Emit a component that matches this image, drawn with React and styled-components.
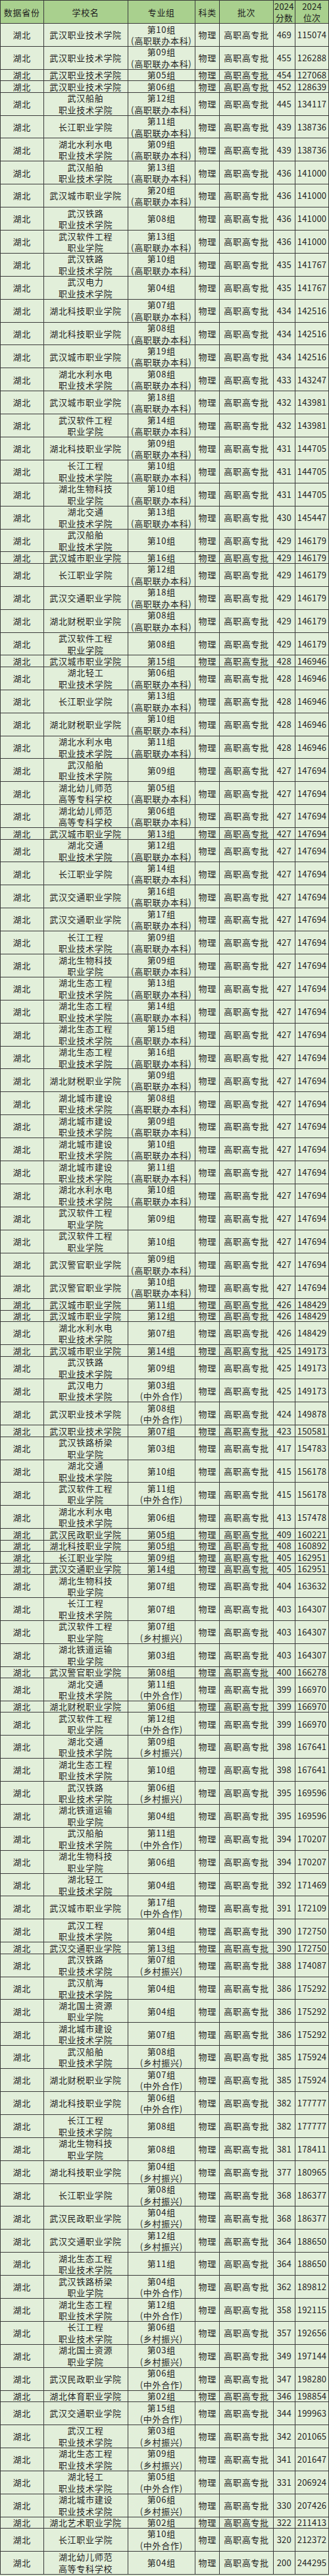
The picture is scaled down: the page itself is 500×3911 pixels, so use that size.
import React from 'react'
import styled, { createGlobalStyle } from 'styled-components'

const GlobalStyle = createGlobalStyle`
  html, body {
    margin: 0;
    padding: 0;
    background: #e2efda;
  }
`

const COLS = '66.5px 128px 102.5px 37.3px 81.4px 33.3px 51px'
const TALL = 34.9
const SHORT = 17.45

const StyledTable = styled.div`
  width: 500px;
  font-family: "Noto Sans CJK SC", "Noto Sans", sans-serif;
  font-size: 13px;
  color: #1f1f1f;
  background: #e2efda;
`

const StyledRow = styled.div`
  display: grid;
  grid-template-columns: ${COLS};
  height: ${props => props.$h}px;
  box-sizing: border-box;
  background: ${props => props.$head ? '#a9d08e' : '#e2efda'};
`

const StyledCell = styled.div`
  display: flex;
  flex-direction: column;
  align-items: center;
  justify-content: center;
  box-sizing: border-box;
  border-right: 1px solid #3b3b3b;
  border-bottom: 1px solid #3b3b3b;
  &:first-child {
    border-left: 1px solid #3b3b3b;
  }
  line-height: 17.45px;
  letter-spacing: ${props => props.$num ? '0.2px' : '0.7px'};
  white-space: nowrap;
  overflow: hidden;
`

const StyledHeadCell = styled(StyledCell)`
  border-top: 1px solid #3b3b3b;
  line-height: 17px;
  color: #222;
`

const StyledLine = styled.span`
  display: block;
`

// school (two lines split by "/"), group, note, score, rank
const data = [
  ['武汉职业技术学院', '第10组', '高职联办本科', 469, 115074],
  ['武汉职业技术学院', '第09组', '高职联办本科', 455, 126288],
  ['武汉职业技术学院', '第05组', '', 454, 127068],
  ['武汉职业技术学院', '第06组', '', 452, 128639],
  ['武汉船舶/职业技术学院', '第12组', '高职联办本科', 445, 134117],
  ['长江职业学院', '第11组', '高职联办本科', 439, 138736],
  ['湖北水利水电/职业技术学院', '第09组', '高职联办本科', 439, 138736],
  ['武汉船舶/职业技术学院', '第13组', '高职联办本科', 436, 141000],
  ['武汉城市职业学院', '第20组', '高职联办本科', 436, 141000],
  ['武汉铁路/职业技术学院', '第08组', '', 436, 141000],
  ['武汉软件工程/职业学院', '第13组', '高职联办本科', 436, 141000],
  ['武汉铁路/职业技术学院', '第10组', '高职联办本科', 435, 141767],
  ['武汉电力/职业技术学院', '第04组', '', 435, 141767],
  ['湖北科技职业学院', '第07组', '高职联办本科', 434, 142516],
  ['湖北科技职业学院', '第08组', '高职联办本科', 434, 142516],
  ['武汉城市职业学院', '第19组', '高职联办本科', 434, 142516],
  ['湖北水利水电/职业技术学院', '第08组', '高职联办本科', 433, 143247],
  ['武汉城市职业学院', '第18组', '高职联办本科', 432, 143981],
  ['武汉软件工程/职业学院', '第14组', '高职联办本科', 432, 143981],
  ['湖北科技职业学院', '第09组', '高职联办本科', 431, 144705],
  ['长江工程/职业技术学院', '第10组', '高职联办本科', 431, 144705],
  ['湖北生物科技/职业学院', '第10组', '高职联办本科', 431, 144705],
  ['湖北交通/职业技术学院', '第13组', '高职联办本科', 430, 145447],
  ['武汉船舶/职业技术学院', '第10组', '', 429, 146179],
  ['武汉城市职业学院', '第16组', '', 429, 146179],
  ['长江职业学院', '第12组', '高职联办本科', 429, 146179],
  ['武汉交通职业学院', '第18组', '高职联办本科', 429, 146179],
  ['湖北财税职业学院', '第08组', '高职联办本科', 429, 146179],
  ['武汉软件工程/职业学院', '第08组', '', 429, 146179],
  ['武汉城市职业学院', '第15组', '', 428, 146946],
  ['湖北轻工/职业技术学院', '第06组', '高职联办本科', 428, 146946],
  ['长江职业学院', '第13组', '高职联办本科', 428, 146946],
  ['湖北财税职业学院', '第10组', '高职联办本科', 428, 146946],
  ['湖北水利水电/职业技术学院', '第11组', '高职联办本科', 428, 146946],
  ['武汉船舶/职业技术学院', '第09组', '', 427, 147694],
  ['湖北幼儿师范/高等专科学校', '第05组', '高职联办本科', 427, 147694],
  ['湖北幼儿师范/高等专科学校', '第06组', '高职联办本科', 427, 147694],
  ['武汉城市职业学院', '第13组', '', 427, 147694],
  ['湖北交通/职业技术学院', '第12组', '高职联办本科', 427, 147694],
  ['长江职业学院', '第14组', '高职联办本科', 427, 147694],
  ['武汉交通职业学院', '第16组', '高职联办本科', 427, 147694],
  ['武汉交通职业学院', '第17组', '高职联办本科', 427, 147694],
  ['长江工程/职业技术学院', '第09组', '高职联办本科', 427, 147694],
  ['湖北生物科技/职业学院', '第09组', '高职联办本科', 427, 147694],
  ['湖北生态工程/职业技术学院', '第13组', '高职联办本科', 427, 147694],
  ['湖北生态工程/职业技术学院', '第14组', '高职联办本科', 427, 147694],
  ['湖北生态工程/职业技术学院', '第15组', '高职联办本科', 427, 147694],
  ['湖北生态工程/职业技术学院', '第16组', '高职联办本科', 427, 147694],
  ['湖北财税职业学院', '第09组', '高职联办本科', 427, 147694],
  ['湖北城市建设/职业技术学院', '第08组', '高职联办本科', 427, 147694],
  ['湖北城市建设/职业技术学院', '第09组', '高职联办本科', 427, 147694],
  ['湖北城市建设/职业技术学院', '第10组', '高职联办本科', 427, 147694],
  ['湖北城市建设/职业技术学院', '第11组', '高职联办本科', 427, 147694],
  ['湖北水利水电/职业技术学院', '第10组', '高职联办本科', 427, 147694],
  ['武汉软件工程/职业学院', '第09组', '', 427, 147694],
  ['武汉软件工程/职业学院', '第10组', '', 427, 147694],
  ['武汉警官职业学院', '第09组', '高职联办本科', 427, 147694],
  ['武汉警官职业学院', '第10组', '高职联办本科', 427, 147694],
  ['武汉城市职业学院', '第11组', '', 426, 148429],
  ['武汉城市职业学院', '第12组', '', 426, 148429],
  ['湖北水利水电/职业技术学院', '第07组', '', 426, 148429],
  ['武汉城市职业学院', '第14组', '', 425, 149173],
  ['武汉铁路/职业技术学院', '第09组', '', 425, 149173],
  ['武汉电力/职业技术学院', '第03组', '中外合作', 425, 149173],
  ['武汉职业技术学院', '第08组', '中外合作', 424, 149878],
  ['武汉职业技术学院', '第07组', '', 423, 150581],
  ['武汉铁路桥梁/职业学院', '第03组', '', 417, 154783],
  ['湖北交通/职业技术学院', '第10组', '', 415, 156178],
  ['武汉软件工程/职业学院', '第11组', '中外合作', 415, 156178],
  ['湖北水利水电/职业技术学院', '第06组', '', 413, 157478],
  ['武汉民政职业学院', '第05组', '', 409, 160221],
  ['湖北科技职业学院', '第05组', '', 408, 160892],
  ['长江职业学院', '第09组', '', 405, 162951],
  ['武汉交通职业学院', '第14组', '', 405, 162951],
  ['湖北生物科技/职业学院', '第07组', '', 404, 163632],
  ['长江工程/职业技术学院', '第07组', '', 403, 164307],
  ['武汉软件工程/职业学院', '第07组', '乡村振兴', 403, 164307],
  ['湖北铁道运输/职业学院', '第03组', '', 403, 164307],
  ['武汉警官职业学院', '第08组', '', 400, 166278],
  ['湖北交通/职业技术学院', '第11组', '中外合作', 399, 166970],
  ['湖北财税职业学院', '第06组', '', 399, 166970],
  ['武汉软件工程/职业学院', '第12组', '中外合作', 399, 166970],
  ['湖北交通/职业技术学院', '第09组', '乡村振兴', 398, 167641],
  ['湖北生态工程/职业技术学院', '第10组', '', 398, 167641],
  ['武汉铁路/职业技术学院', '第06组', '乡村振兴', 395, 169596],
  ['湖北铁道运输/职业学院', '第04组', '', 395, 169596],
  ['武汉船舶/职业技术学院', '第11组', '中外合作', 394, 170207],
  ['湖北生物科技/职业学院', '第06组', '', 394, 170207],
  ['湖北轻工/职业技术学院', '第04组', '', 392, 171469],
  ['武汉城市职业学院', '第17组', '中外合作', 391, 172109],
  ['武汉工程/职业技术学院', '第04组', '', 390, 172750],
  ['武汉交通职业学院', '第13组', '', 390, 172750],
  ['武汉铁路/职业技术学院', '第07组', '乡村振兴', 388, 174087],
  ['武汉航海/职业技术学院', '第04组', '', 386, 175292],
  ['湖北国土资源/职业学院', '第04组', '', 386, 175292],
  ['湖北城市建设/职业技术学院', '第07组', '', 386, 175292],
  ['武汉船舶/职业技术学院', '第08组', '乡村振兴', 385, 175924],
  ['湖北财税职业学院', '第07组', '中外合作', 385, 175924],
  ['湖北科技职业学院', '第06组', '中外合作', 382, 177777],
  ['长江工程/职业技术学院', '第08组', '', 382, 177777],
  ['湖北生物科技/职业学院', '第08组', '', 381, 178411],
  ['湖北科技职业学院', '第04组', '乡村振兴', 377, 180965],
  ['长江职业学院', '第08组', '乡村振兴', 368, 186377],
  ['武汉民政职业学院', '第04组', '乡村振兴', 368, 186377],
  ['武汉交通职业学院', '第12组', '乡村振兴', 364, 188650],
  ['湖北生态工程/职业技术学院', '第11组', '', 364, 188650],
  ['武汉铁路桥梁/职业学院', '第04组', '中外合作', 362, 189812],
  ['湖北生态工程/职业技术学院', '第12组', '中外合作', 358, 192115],
  ['长江工程/职业技术学院', '第06组', '乡村振兴', 357, 192656],
  ['湖北国土资源/职业学院', '第03组', '乡村振兴', 349, 197144],
  ['武汉民政职业学院', '第06组', '中外合作', 347, 198280],
  ['湖北体育职业学院', '第02组', '', 346, 198854],
  ['武汉交通职业学院', '第15组', '中外合作', 344, 199963],
  ['武汉工程/职业技术学院', '第03组', '乡村振兴', 342, 201065],
  ['湖北生态工程/职业技术学院', '第09组', '乡村振兴', 341, 201647],
  ['湖北轻工/职业技术学院', '第05组', '中外合作', 331, 206924],
  ['湖北城市建设/职业技术学院', '第06组', '乡村振兴', 330, 207426],
  ['湖北艺术职业学院', '第02组', '', 322, 211413],
  ['长江职业学院', '第10组', '中外合作', 320, 212372],
  ['湖北幼儿师范/高等专科学校', '第04组', '', 200, 244295],
]

const Lines = ({ items }) => items.map((t, i) => <StyledLine key={i}>{t}</StyledLine>)

const App = () => {
  return (
    <>
      <GlobalStyle />
      <StyledTable>
        <StyledRow $head $h={36}>
          <StyledHeadCell>数据省份</StyledHeadCell>
          <StyledHeadCell>学校名</StyledHeadCell>
          <StyledHeadCell>专业组</StyledHeadCell>
          <StyledHeadCell>科类</StyledHeadCell>
          <StyledHeadCell>批次</StyledHeadCell>
          <StyledHeadCell $num><Lines items={['2024', '分数']} /></StyledHeadCell>
          <StyledHeadCell $num><Lines items={['2024', '位次']} /></StyledHeadCell>
        </StyledRow>
        {data.map(([school, group, note, score, rank], i) => {
          const schoolLines = school.split('/')
          const groupLines = note ? [group, `(${note})`] : [group]
          const tall = schoolLines.length > 1 || groupLines.length > 1
          return (
            <StyledRow key={i} $h={tall ? TALL : SHORT}>
              <StyledCell>湖北</StyledCell>
              <StyledCell><Lines items={schoolLines} /></StyledCell>
              <StyledCell><Lines items={groupLines} /></StyledCell>
              <StyledCell>物理</StyledCell>
              <StyledCell>高职高专批</StyledCell>
              <StyledCell $num>{score}</StyledCell>
              <StyledCell $num>{rank}</StyledCell>
            </StyledRow>
          )
        })}
      </StyledTable>
    </>
  )
}

export default App
